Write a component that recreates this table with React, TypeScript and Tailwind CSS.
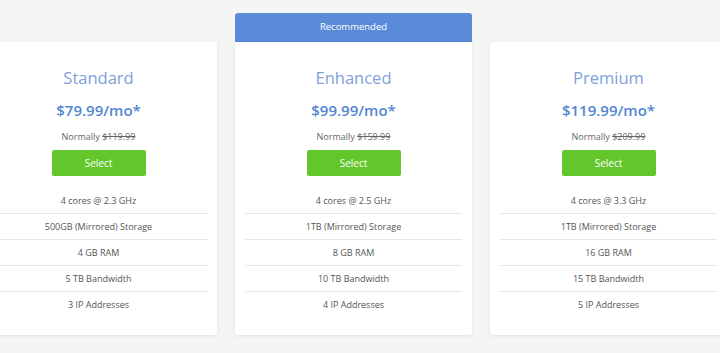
const plans = [
  {
    name: "Standard",
    price: "$79.99/mo*",
    normal: "$119.99",
    features: ["4 cores @ 2.3 GHz", "500GB (Mirrored) Storage", "4 GB RAM", "5 TB Bandwidth", "3 IP Addresses"],
  },
  {
    name: "Enhanced",
    price: "$99.99/mo*",
    normal: "$159.99",
    recommended: true,
    features: ["4 cores @ 2.5 GHz", "1TB (Mirrored) Storage", "8 GB RAM", "10 TB Bandwidth", "4 IP Addresses"],
  },
  {
    name: "Premium",
    price: "$119.99/mo*",
    normal: "$209.99",
    features: ["4 cores @ 3.3 GHz", "1TB (Mirrored) Storage", "16 GB RAM", "15 TB Bandwidth", "5 IP Addresses"],
  },
];

const App = () => {
  return (
    <div className="w-[720px] h-[353px] overflow-hidden bg-[#f5f5f5] font-['Open_Sans',sans-serif]">
      <div className="flex items-end gap-[18px] ml-[-20px] pt-[13px]">
        {plans.map((plan) => (
          <div key={plan.name} className="w-[237px] shrink-0 flex flex-col">
            {plan.recommended && (
              <div className="h-[29px] bg-[#5a8bd8] rounded-t-[3px] flex items-center justify-center text-white text-[9.5px]">
                Recommended
              </div>
            )}
            <div
              className={`bg-white shadow-[0_1px_4px_rgba(0,0,0,0.08)] pt-[24px] pb-[17px] px-[10px] flex flex-col items-center ${
                plan.recommended ? "rounded-b-[3px]" : "rounded-[3px]"
              }`}
            >
              <h3 className="text-[16.5px] leading-[24px] text-[#7ea1dc] font-normal">{plan.name}</h3>
              <div className="mt-[9px] text-[15px] leading-[22px] text-[#5286d3] font-semibold">{plan.price}</div>
              <div className="mt-[9px] text-[9px] leading-[14px] text-[#666]">
                Normally <span className="line-through">{plan.normal}</span>
              </div>
              <button className="mt-[6px] w-[94px] h-[26px] bg-[#63c72b] rounded-[2px] text-white text-[10px]">
                Select
              </button>
              <ul className="mt-[12px] w-full">
                {plan.features.map((f, i) => (
                  <li
                    key={f}
                    className={`h-[26px] flex items-center justify-center text-[9px] text-[#555] ${
                      i < plan.features.length - 1 ? "border-b border-[#e6e6e6]" : ""
                    }`}
                  >
                    {f}
                  </li>
                ))}
              </ul>
            </div>
          </div>
        ))}
      </div>
    </div>
  );
};

export default App;
